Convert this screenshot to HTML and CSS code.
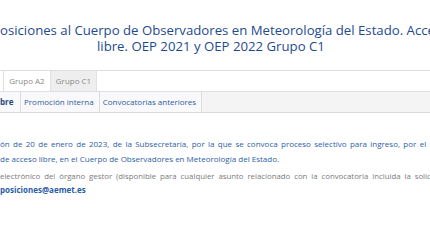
FILE: index.html
```html
<!DOCTYPE html>
<html lang="es">
<head>
<meta charset="utf-8">
<title>Oposiciones</title>
<link rel="stylesheet" href="styles.css">
</head>
<body>
<div class="page">
  <h1 class="title">
    <span class="title-line first">osiciones al Cuerpo de Observadores en Meteorología del Estado. Acceso</span>
    <span class="title-line second">libre. OEP 2021 y OEP 2022 Grupo C1</span>
  </h1>
  <nav class="tabs groups">
    <span class="tab">Grupo A2</span>
    <span class="tab active">Grupo C1</span>
  </nav>
  <nav class="tabs sub">
    <span class="tab current">bre</span>
    <span class="tab">Promoción interna</span>
    <span class="tab">Convocatorias anteriores</span>
  </nav>
  <div class="content">
    <p class="resol"><span class="spread">ón de 20 de enero de 2023, de la Subsecretaría, por la que se convoca proceso selectivo para ingreso, por el sistema</span><br>de acceso libre, en el Cuerpo de Observadores en Meteorología del Estado.</p>
    <p class="contact"><span class="just">electrónico del órgano gestor (disponible para cualquier asunto relacionado con la convocatoria incluida la solicitud</span><br><strong class="mail">posiciones@aemet.es</strong></p>
  </div>
</div>
</body>
</html>
```

FILE: styles.css
```css
html, body {
  margin: 0;
  padding: 0;
  background: #ffffff;
  overflow: hidden;
}
body {
  font-family: "Open Sans", "Liberation Sans", sans-serif;
  width: 430px;
  height: 240px;
}
.page {
  padding-top: 22px;
}
.title {
  margin: 0;
  font-size: 13.2px;
  line-height: 16px;
  font-weight: 400;
  color: #1e4b8d;
}
.title-line {
  display: block;
  white-space: nowrap;
}
.title-line.second {
  padding-left: 97px;
}
.tabs {
  display: flex;
  white-space: nowrap;
  font-size: 8px;
  line-height: 20px;
}
.groups {
  margin-top: 16px;
  border-top: 1px solid #dedede;
  border-bottom: 1px solid #dedede;
  padding-left: 3px;
}
.groups .tab {
  width: 47px;
  text-align: center;
  color: #8a8a8a;
  border-left: 1px solid #e2e2e2;
  box-sizing: border-box;
}
.groups .tab.active {
  background: #eeeeee;
  border-right: 1px solid #e2e2e2;
}
.sub {
  background: #f4f4f4;
  border-bottom: 1px solid #dadada;
}
.sub .tab {
  padding: 0 5px 0 3px;
  color: #2d5b9e;
  border-right: 1px solid #dcdcdc;
  background: #f9f9fb;
}
.sub .tab.current {
  font-weight: 700;
  color: #254a80;
  padding: 0 3px 0 0;
  width: 17px;
}
.content {
  padding-top: 23px;
  font-size: 8px;
}
.content p {
  margin: 0;
  white-space: nowrap;
}
.resol {
  line-height: 15px;
  color: #2e5ea6;
}
.spread {
  word-spacing: 1.25px;
}
.contact {
  margin-top: 3px !important;
  line-height: 13px;
  color: #7a7a7a;
}
.just {
  font-size: 7.8px;
  word-spacing: 1.9px;
}
.mail {
  color: #2b5ca6;
  font-weight: 700;
}
```
